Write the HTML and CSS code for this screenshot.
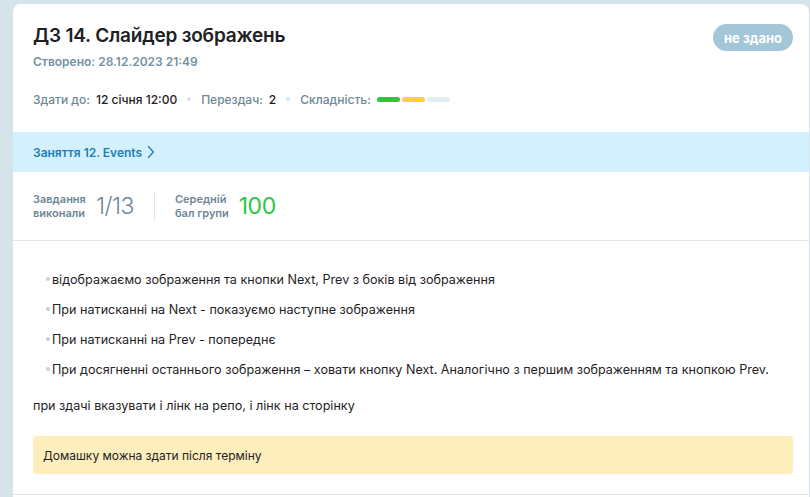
FILE: index.html
```html
<!DOCTYPE html>
<html lang="uk">
<head>
<meta charset="utf-8">
<link rel="stylesheet" href="styles.css">
</head>
<body>
<div class="card">
  <div class="head">
    <div class="head-top">
      <div>
        <h1 class="title">ДЗ 14. Слайдер зображень</h1>
        <div class="created">Створено: 28.12.2023 21:49</div>
      </div>
      <span class="badge">не здано</span>
    </div>
    <div class="meta">
      <span class="lbl">Здати до:</span><span class="val">12 січня 12:00</span>
      <span class="dot"></span>
      <span class="lbl">Перездач:</span><span class="val">2</span>
      <span class="dot"></span>
      <span class="lbl">Складність:</span>
      <span class="bars"><i class="bar green"></i><i class="bar yellow"></i><i class="bar gray"></i></span>
    </div>
  </div>
  <div class="lesson">
    <a class="lesson-link">Заняття 12. Events
      <svg class="chev" width="8" height="14" viewBox="0 0 8 14"><path d="M1.5 1.5 L6.3 7 L1.5 12.5" fill="none" stroke="#1b86c4" stroke-width="1.4" stroke-linecap="round" stroke-linejoin="round"/></svg>
    </a>
  </div>
  <div class="stats">
    <div class="stat">
      <div class="stat-lbl">Завдання<br>виконали</div>
      <div class="stat-num">1/13</div>
    </div>
    <div class="sep"></div>
    <div class="stat">
      <div class="stat-lbl">Середній<br>бал групи</div>
      <div class="stat-num good">100</div>
    </div>
  </div>
  <div class="body">
    <ul class="list">
      <li>відображаємо зображення та кнопки Next, Prev з боків від зображення</li>
      <li>При натисканні на Next - показуємо наступне зображення</li>
      <li>При натисканні на Prev - попереднє</li>
      <li>При досягненні останнього зображення – ховати кнопку Next. Аналогічно з першим зображенням та кнопкою Prev.</li>
    </ul>
    <p class="note">при здачі вказувати і лінк на репо, і лінк на сторінку</p>
    <div class="warn">Домашку можна здати після терміну</div>
  </div>
  <div class="foot"></div>
</div>
</body>
</html>
```

FILE: styles.css
```css
* { box-sizing: border-box; }
html, body { margin: 0; padding: 0; }
body {
  background: #d5e3eb;
  font-family: "Inter", "Noto Sans", sans-serif;
  color: #1f2326;
  height: 497px;
  overflow: hidden;
}
.card {
  margin: 4px 1px 0 13px;
  background: #fff;
  border-radius: 8px 8px 0 0;
  min-height: 493px;
}
.head { padding: 19px 16px 0 20px; }
.head-top { display: flex; justify-content: space-between; align-items: flex-start; }
.title {
  margin: 0;
  font-size: 19px;
  line-height: 26px;
  font-weight: 600;
  color: #1e2124;
  letter-spacing: -0.2px;
}
.created {
  margin-top: 5px;
  font-size: 12px;
  font-weight: 600;
  color: #7591a1;
}
.badge {
  margin-top: 1px;
  background: #a3c6d8;
  color: #fff;
  font-size: 13px;
  font-weight: 700;
  border-radius: 14px;
  padding: 7px 11px 6px;
  line-height: 14px;
}
.meta {
  display: flex;
  align-items: center;
  margin-top: 22px;
  height: 16px;
  font-size: 12px;
  font-weight: 500;
}
.lbl { color: #6d8797; margin-right: 6px; }
.val { color: #1e2124; }
.dot {
  width: 4px; height: 4px; border-radius: 50%;
  background: #d6e3ea;
  margin: 0 10px;
}
.bars { display: flex; gap: 2px; margin-left: 0; }
.bar { display: block; width: 23px; height: 5px; border-radius: 3px; }
.green { background: #27c93f; }
.yellow { background: #ffce3d; }
.gray { background: #e3eef2; }
.lesson {
  margin-top: 25px;
  background: #d4f0fd;
  height: 40px;
  display: flex;
  align-items: center;
  padding-left: 20px;
}
.lesson-link {
  font-size: 12px;
  font-weight: 600;
  color: #1a80b9;
  display: flex;
  align-items: center;
  gap: 5px;
}
.stats {
  display: flex;
  align-items: center;
  height: 69px;
  padding-left: 20px;
  border-bottom: 1px solid #dde8ee;
}
.stat { display: flex; align-items: center; gap: 10px; }
.stat-lbl {
  font-size: 11px;
  line-height: 14px;
  font-weight: 600;
  color: #6d8797;
}
.stat-num {
  font-size: 23px;
  font-weight: 300;
  color: #6d8797;
  letter-spacing: -0.5px;
}
.stat-num.good { color: #27c93f; font-weight: 400; }
.sep {
  width: 1px;
  height: 30px;
  background: #dde8ee;
  margin: 0 20px 0 20px;
}
.body { padding: 31px 16px 0 20px; }
.list { list-style: none; margin: 0; padding: 0 0 0 13px; }
.list li {
  position: relative;
  font-size: 12.6px;
  line-height: 16px;
  margin-bottom: 14px;
  padding-left: 6px;
  color: #1f2326;
}
.list li::before {
  content: "";
  position: absolute;
  left: 0; top: 5px;
  width: 4px; height: 4px; border-radius: 50%;
  background: #b9d3e0;
}
.note { margin: 20px 0 0; font-size: 12.6px; line-height: 16px; }
.warn {
  margin-top: 22px;
  background: #feeebd;
  border-radius: 4px;
  height: 38px;
  display: flex;
  align-items: center;
  padding-left: 10px;
  font-size: 12px;
  color: #1f2326;
}
.foot {
  margin-top: 20px;
  border-top: 1px solid #dde8ee;
}
```
